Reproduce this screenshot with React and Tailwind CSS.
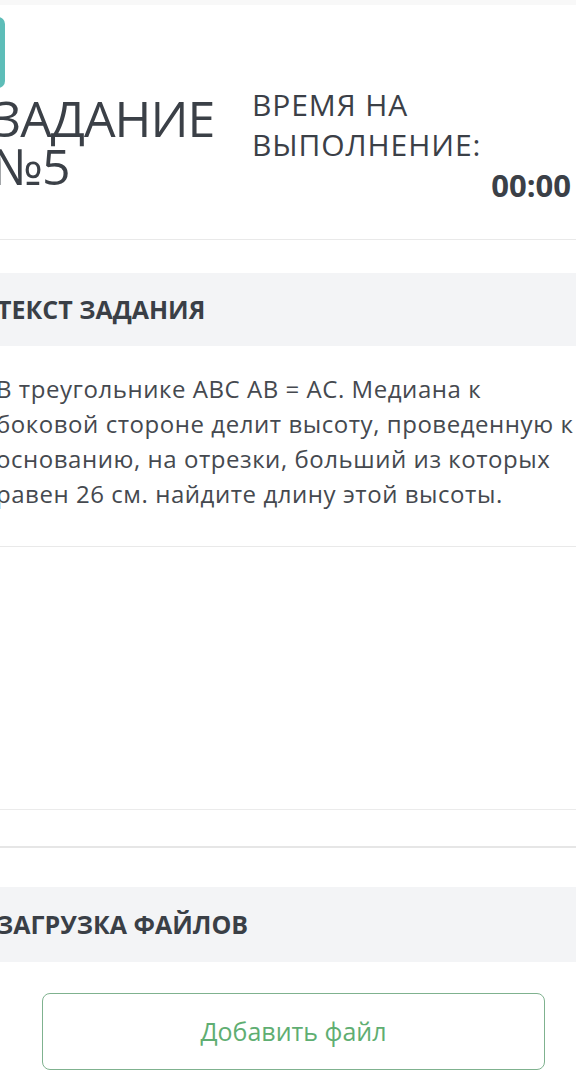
export default function App() {
  return (
    <div className="w-[576px] h-[1080px] overflow-hidden bg-white font-['Open_Sans',sans-serif] text-[#3b4047]">
      <div className="h-[5px] bg-[#f8f8f8]" />
      <div className="ml-[-8px] w-[584px]">
        {/* header */}
        <div className="flex items-start h-[235px] border-b border-[#e9e9e9]">
          <div className="w-[260px] shrink-0">
            <div className="mt-[12px] ml-[-4px] w-[17px] h-[71px] rounded-[7px] bg-[#5dbdb8]" />
            <div className="mt-[6px] text-[50px] leading-[48px] font-normal tracking-[-1px]">
              ЗАДАНИЕ
              <br />
              №5
            </div>
          </div>
          <div className="flex-1 mt-[80px] pr-[5px]">
            <div className="text-[30px] leading-[40px] tracking-[0.9px]">
              ВРЕМЯ НА
              <br />
              ВЫПОЛНЕНИЕ:
            </div>
            <div className="text-right text-[31px] leading-[40px] font-bold">00:00</div>
          </div>
        </div>

        {/* task text */}
        <div className="mt-[33px] h-[73px] bg-[#f3f4f6] flex items-center">
          <div className="ml-[5px] text-[25px] font-bold text-[#3a3f46]">ТЕКСТ ЗАДАНИЯ</div>
        </div>
        <div className="pl-[4px] mr-[-10px] pt-[25px] pb-[35px] text-[24px] leading-[35px] tracking-[0.55px] text-[#45494f] border-b border-[#e9e9e9]">
          <p className="w-[582px]">
            В треугольнике ABC AB = AC. Медиана к боковой стороне делит высоту, проведенную к основанию, на отрезки, больший из которых равен 26 см. найдите длину этой высоты.
          </p>
        </div>

        <div className="h-[263px] border-b border-[#ebebeb]" />
        <div className="h-[38px] border-b-2 border-[#e6e6e6]" />

        {/* files */}
        <div className="mt-[39px] h-[75px] bg-[#f3f4f6] flex items-center">
          <div className="ml-[5px] text-[25px] font-bold text-[#3a3f46]">ЗАГРУЗКА ФАЙЛОВ</div>
        </div>
        <div className="pt-[31px] pl-[50px] pr-[31px]">
          <div className="h-[77px] rounded-[8px] border border-[#7fb28f] flex items-center justify-center text-[25px] text-[#5fae72]">
            Добавить файл
          </div>
        </div>
      </div>
    </div>
  );
}
